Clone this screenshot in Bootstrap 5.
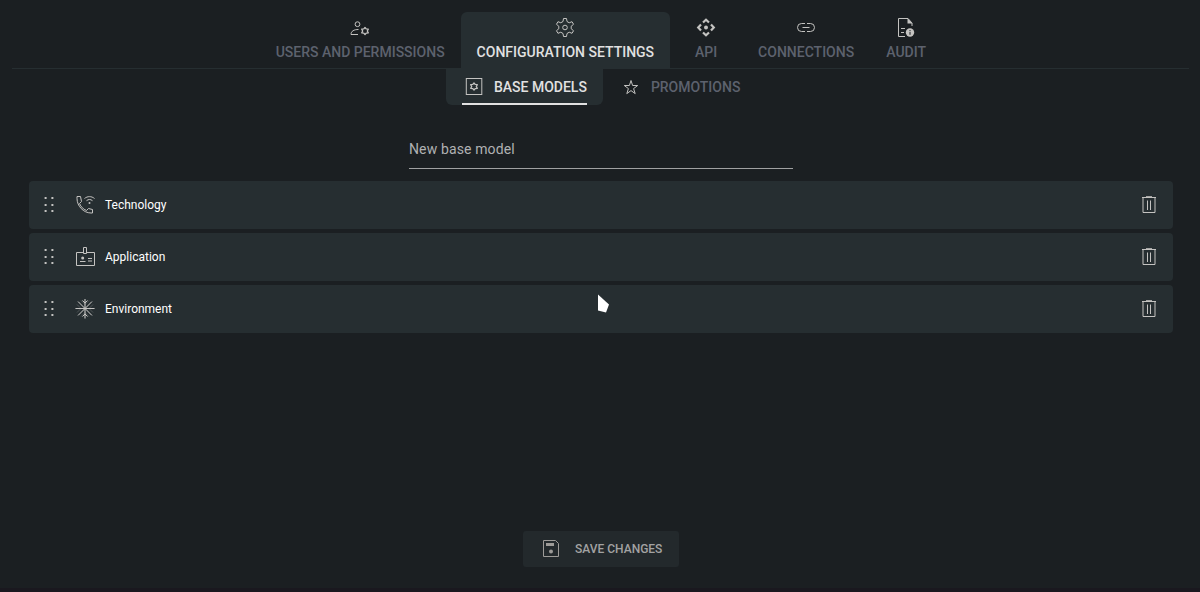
<!DOCTYPE html>
<html lang="en" data-bs-theme="dark">
<head>
<meta charset="utf-8">
<meta name="viewport" content="width=device-width, initial-scale=1">
<title>Configuration settings</title>
<link href="https://cdn.jsdelivr.net/npm/bootstrap@5.3.0/dist/css/bootstrap.min.css" rel="stylesheet">
<script src="https://cdn.jsdelivr.net/npm/bootstrap@5.3.0/dist/js/bootstrap.bundle.min.js" defer></script>
<style>
  :root { --page: #1b1f22; --panel: #262e31; --muted: #5d626e; --ink: #e1e1e1; --icon: #c4c3c1; }
  body { background: var(--page); color: #fff; font-family: Roboto, "Liberation Sans", sans-serif; font-size: 14px; line-height: 20px; height: 592px; overflow: hidden; border-bottom: 4px solid #1a181f; }
  main { padding: 12px 11px 0 12px; }
  svg { fill: none; stroke: var(--icon); stroke-width: 1; display: block; flex: none; }
  svg .solid { fill: var(--icon); stroke: none; }
  .main-tabs { border-bottom: 1px solid var(--panel); height: 57px; padding-left: .8px; }
  .sub-tabs { padding-left: 1.3px; }
  .main-tabs .nav-link, .sub-tabs .nav-link { color: var(--muted); font-weight: 500; padding: 0 16px; }
  .main-tabs .nav-link { height: 56px; min-width: 72px; padding-top: 6px; display: flex; flex-direction: column; align-items: center; gap: 4px; border-radius: 6px 6px 0 0; white-space: nowrap; }
  .sub-tabs .nav-link { height: 36px; border-radius: 0 0 6px 6px; }
  .main-tabs .nav-link.active, .sub-tabs .nav-link.active { background: var(--panel); color: var(--ink); }
  .tab-label { display: flex; align-items: center; gap: 8px; height: 36px; white-space: nowrap; }
  .active .tab-label { border-bottom: 2px solid var(--ink); padding-top: 2px; }
  .model-field { width: 384px; height: 40px; margin-top: 24px; border: 0; border-bottom: 1px solid #a0a1a2; background: transparent; padding: 0 0 0 .5px; font-size: 14px; letter-spacing: .13px; color: #fff; border-radius: 0; }
  .model-field::placeholder { color: #b0b1b2; opacity: 1; }
  .model-row { background: var(--panel); height: 48px; border-radius: 4px; font-size: 12px; }
  .model-icon { margin: 0 8px 0 12px; }
  .model-trash { margin: 0 12px 0 auto; }
  .models { margin: 12px 16px 0 17px; }
  .btn-save { width: 156px; height: 36px; margin-bottom: 21px; border: 0; border-radius: 3px; background: #23292c; color: #a2a2a2; font-size: 12px; font-weight: 500; white-space: nowrap; }
  .btn-save svg { --icon: #9d9b98; margin-right: 8.5px; }
  .pointer { left: 597px; top: 294px; stroke: none; }
</style>
</head>
<body>
<svg width="0" height="0" class="position-absolute">
  <symbol id="gear" viewBox="-10 -10 20 20" overflow="visible"><path stroke-linejoin="round" d="M-2-6-1.5-9H1.5L2-6 4.2-4.73 7.04-5.8 8.54-3.2 6.2-1.27V1.27L8.54 3.2 7.04 5.8 4.2 4.73 2 6 1.5 9H-1.5L-2 6-4.2 4.73-7.04 5.8-8.54 3.2-6.2 1.27V-1.27L-8.54-3.2-7.04-5.8-4.2-4.73Z"/></symbol>
  <symbol id="cog" viewBox="-5 -5 10 10" overflow="visible"><path stroke-width="1.3" stroke-linejoin="round" d="M0-3.5 1.2-2.1 3.3-1.9 2.3 0 3.3 1.9 1.2 2.1 0 3.5-1.2 2.1-3.3 1.9-2.3 0-3.3-1.9-1.2-2.1Z"/></symbol>
  <symbol id="grip" viewBox="0 0 24 24"><path class="solid" d="M7.600 4h2v2h-2zM14.400 4h2v2h-2zM7.600 11h2v2h-2zM14.400 11h2v2h-2zM7.600 17h2v2h-2zM14.400 17h2v2h-2z"/></symbol>
  <symbol id="trash" viewBox="0 0 24 24"><path d="M5 4.500h14M9 3.700h6M6 5v14.500h12V5M10.500 7.500v9.500M13.500 7.500v9.500"/></symbol>
</svg>

<main class="d-flex flex-column h-100">
  <nav class="nav main-tabs justify-content-center flex-nowrap">
    <a class="nav-link" href="#">
      <svg width="20" height="20"><circle cx="7.500" cy="6.200" r="2.400"/><path d="M8.500 11.500C4 11.500 1 13 1 16.500H8"/><use href="#cog" x="10" y="8" width="10" height="10"/></svg>
      <span>USERS AND PERMISSIONS</span></a>
    <a class="nav-link active" href="#">
      <svg width="20" height="20"><use href="#gear" x="0" y="-.5" width="20" height="20"/><circle cx="10" cy="9.500" r="2.300"/></svg>
      <span>CONFIGURATION SETTINGS</span></a>
    <a class="nav-link" href="#">
      <svg width="20" height="20"><path stroke-width="2.200" d="M7 4.500 10 1.800 13 4.500M7 14.500l3 2.700 3-2.700M5 6.500 2.200 9.500 5 12.500M15 6.500l2.800 3-2.800 3"/><circle class="solid" cx="10" cy="9.500" r="2"/></svg>
      <span>API</span></a>
    <a class="nav-link" href="#">
      <svg width="20" height="20"><path d="M9 5.500H5.500a4 4 0 0 0 0 8H9M11 5.500h3.500a4 4 0 0 1 0 8H11M6.500 9.500h7"/></svg>
      <span>CONNECTIONS</span></a>
    <a class="nav-link" href="#">
      <svg width="20" height="20"><path d="M9 18.500H2.500V.5H12L16 5v3M5 10.500h4M5 14.500h3"/><path class="solid" d="M11.500 0 16.500 5.500h-5z"/><circle class="solid" cx="14" cy="14.500" r="4.200"/><path stroke="#1b1f22" d="M14 13.800v3M14 12v1"/></svg>
      <span>AUDIT</span></a>
  </nav>

  <nav class="nav sub-tabs justify-content-center flex-nowrap">
    <a class="nav-link active" href="#"><span class="tab-label">
      <svg width="24" height="24"><rect x="4.300" y="3.500" width="15.500" height="16"/><use href="#cog" x="7" y="6.500" width="10" height="10"/></svg>
      BASE MODELS</span></a>
    <a class="nav-link" href="#"><span class="tab-label">
      <svg width="24" height="24"><path d="m12 5.500 1.600 5H18.700l-4.100 3.100 1.600 5L12 15.600l-4.200 3 1.600-5L5.300 10.500h5.100z"/></svg>
      PROMOTIONS</span></a>
  </nav>

  <input class="form-control model-field mx-auto" placeholder="New base model" aria-label="New base model">

  <section class="models d-grid gap-1">
    <div class="model-row d-flex align-items-center">
      <svg class="ms-2" width="24" height="24"><use href="#grip"/></svg>
      <svg class="model-icon" width="24" height="24"><path d="M4 3.500H7.500L8.500 8.500 6.500 10.500C8 14 10 16 13.500 17.500L15.500 15.500l4 1v3.500H18C10.500 20 4 13 4 5.500zM11.500 5.500c3-2.500 7-2.500 10 0M13.500 7.700c2-1.600 4-1.600 6 0"/><circle class="solid" cx="16.500" cy="10" r="1"/></svg>
      <span>Technology</span>
      <svg class="model-trash" width="24" height="24"><use href="#trash"/></svg>
    </div>
    <div class="model-row d-flex align-items-center">
      <svg class="ms-2" width="24" height="24"><use href="#grip"/></svg>
      <svg class="model-icon" width="24" height="24"><path d="M10.500 7.500h-7v13h18v-13h-8M10.500 2.500h3v6h-3zM7 16.500h5.500M15 13.500h4M15 16h4"/><circle class="solid" cx="9.700" cy="13" r="1.500"/></svg>
      <span>Application</span>
      <svg class="model-trash" width="24" height="24"><use href="#trash"/></svg>
    </div>
    <div class="model-row d-flex align-items-center">
      <svg class="ms-2" width="24" height="24"><use href="#grip"/></svg>
      <svg class="model-icon" width="24" height="24"><path d="M2.500 11.500h19M12 2v19.500M4 7.500 8 11.500 4 15.500M20 7.500 16 11.500 20 15.500M8 3.500 12 7.500 16 3.500M8 19.500 12 15.500 16 19.500M5.500 5 12 11.500 18.500 5M5.500 18 12 11.500 18.500 18" stroke-opacity=".25"/><path d="M2.500 11.500h19M12 2v19.500M5 4.500l14 14M5 18.500l14-14M9.500 3.500 12 6 14.500 3.500M9.500 19.500 12 17 14.500 19.500"/></svg>
      <span>Environment</span>
      <svg class="model-trash" width="24" height="24"><use href="#trash"/></svg>
    </div>
  </section>

  <button class="btn btn-save d-flex align-items-center mx-auto mt-auto px-3">
    <svg width="28" height="24"><path d="M4.500 3.500h12l3 3v13h-15z"/><path class="solid" d="M7 6h8v3H7z"/><circle class="solid" cx="12" cy="14.500" r="2"/></svg>
    SAVE CHANGES
  </button>
</main>
<svg class="pointer position-absolute" width="14" height="21"><path fill="#fff" d="M1 .5 12 10.500 9 18.500 1 16.500z"/></svg>
</body>
</html>
